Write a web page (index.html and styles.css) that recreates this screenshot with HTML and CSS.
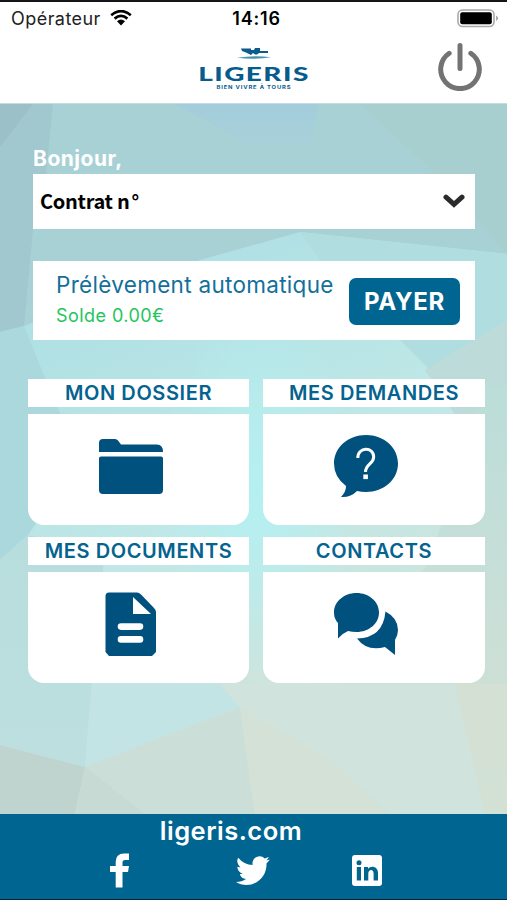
FILE: index.html
```html
<!DOCTYPE html>
<html lang="fr">
<head>
    <meta charset="UTF-8">
    <meta name="viewport" content="width=device-width, initial-scale=1.0">
    <title>Ligeris</title>
    <link rel="stylesheet" href="styles.css">
</head>
<body>
    <header>
        <div class="status">
            <div class="carrier">
                <span>Opérateur</span>
                <svg width="22" height="16" viewBox="0 0 22 16">
                    <path d="M1.2 5.2Q11-3 20.8 5.2M4.6 8.6Q11 3.2 17.4 8.6" fill="none" stroke="#000" stroke-width="2.7"/>
                    <path d="M7 11.2Q11 8 15 11.2L11 15.4Z"/>
                </svg>
            </div>
            <span class="time">14:16</span>
            <svg class="battery" width="42" height="19" viewBox="0 0 42 19">
                <rect x="1" y="1" width="36" height="16.5" rx="4.5" fill="#fff" stroke="#aaa" stroke-width="1.6"/>
                <rect x="3.2" y="3.2" width="31.6" height="12" rx="2"/>
                <path d="M39.2 6.5Q42.6 9.2 39.2 12Z" fill="#999"/>
            </svg>
        </div>
        <div class="topbar">
            <div class="logo">
                <svg width="34" height="13" viewBox="0 0 34 13">
                    <path d="M4 1.5H14V3H17L18 1H23V4H31V6H22L20 7.5H18L16 6 14 8 9 5.5 5 4Z" fill="#0b5c8c"/>
                    <path d="M0 10.8Q17 8 34 10.3Q17 13 0 10.8Z" fill="#4594ae"/>
                </svg>
                <div class="logo-name">LIGERIS</div>
                <div class="logo-sub">BIEN VIVRE À TOURS</div>
            </div>
            <svg class="power" width="44" height="48" viewBox="0 0 44 48">
                <path d="M11.2 10.3A19.3 19.3 0 1 0 32.8 10.3M22 2.6V25.6" fill="none" stroke="#737373" stroke-width="5" stroke-linecap="round"/>
            </svg>
        </div>
    </header>

    <main>
        <svg class="background" viewBox="0 104 507 710" preserveAspectRatio="none">
            <defs>
                <linearGradient id="base" x1="0" y1="0" x2="0.35" y2="1">
                    <stop offset="0" stop-color="#a7d0d6"/>
                    <stop offset="0.3" stop-color="#afe0e4"/>
                    <stop offset="0.65" stop-color="#c0e8e7"/>
                    <stop offset="1" stop-color="#d4e2d7"/>
                </linearGradient>
                <linearGradient id="blue" x1="0" y1="0" x2="0" y2="1">
                    <stop offset="0" stop-color="#a3cddc"/>
                    <stop offset="1" stop-color="#a8d0d9"/>
                </linearGradient>
                <linearGradient id="right" x1="0" y1="0" x2="0" y2="1">
                    <stop offset="0" stop-color="#bcddd9"/>
                    <stop offset="1" stop-color="#d4e1d5"/>
                </linearGradient>
                <linearGradient id="left" x1="0" y1="0" x2="0" y2="1">
                    <stop offset="0" stop-color="#b8dddd"/>
                    <stop offset="1" stop-color="#bddfdf"/>
                </linearGradient>
                <radialGradient id="glow">
                    <stop offset="0" stop-color="#b4f0f2"/>
                    <stop offset="1" stop-color="#b4f0f2" stop-opacity="0"/>
                </radialGradient>
            </defs>
            <rect y="104" width="507" height="710" fill="url(#base)"/>
            <path d="M0 104H507V254L300 232 200 260 24 326 0 332Z" fill="#a8d1d6"/>
            <path d="M360 104H507V254L440 178Z" fill="#a8cfd0"/>
            <path d="M175 104H318L312 144 250 146Z" fill="url(#blue)"/>
            <path d="M0 104H53L46 174 33 230 24 326 0 332Z" fill="#a1c7cf"/>
            <path d="M0 104H33L0 147Z" fill="#9cc0c7"/>
            <path d="M300 232L507 254V325L430 370 320 260Z" fill="#b0dddf"/>
            <path d="M0 332L24 326 45 378 80 460 28 535 0 560Z" fill="#abd8dd"/>
            <path d="M507 320L425 370 485 460 507 450Z" fill="#bddcd9"/>
            <path d="M485 387L507 387V814H420L340 684 430 560Z" fill="url(#right)"/>
            <path d="M0 560L28 535 105 550 92 684 85 767 0 745Z" fill="url(#left)"/>
            <ellipse cx="258" cy="490" rx="100" ry="190" fill="url(#glow)"/>
            <path d="M0 745L85 767 75 814H0Z" fill="#bfd4cf"/>
            <path d="M92 684H220L240 707 85 767Z" fill="#c3e4e4"/>
            <path d="M85 767L240 707 255 814H75Z" fill="#cbded8"/>
            <path d="M85 767L145 814H75Z" fill="#c7dad3"/>
            <path d="M220 684H455L475 770 485 814H255L240 707Z" fill="#d0e3dc"/>
            <path d="M240 707L330 760 390 814H255Z" fill="#d4e1d6"/>
            <path d="M455 684H507V770L475 770Z" fill="#d4e0d4"/>
        </svg>

        <div class="account">
            <div class="hello">Bonjour,</div>
            <div class="contract">
                <span>Contrat n<span class="degree">°</span></span>
                <svg width="22" height="15" viewBox="0 0 22 15">
                    <path d="M3 3.2L11 10.3 19 3.2" fill="none" stroke="#2b2b2b" stroke-width="5" stroke-linecap="round"/>
                </svg>
            </div>
            <div class="payment">
                <div>
                    <div class="mode">Prélèvement automatique</div>
                    <div class="balance">Solde 0.00€</div>
                </div>
                <button class="pay">PAYER</button>
            </div>
        </div>

        <div class="menu">
            <section>
                <h2>MON DOSSIER</h2>
                <div class="tile">
                    <svg width="64" height="64" viewBox="0 0 64 64">
                        <path d="M0 18V9Q0 5 4 5H16Q18 5 19 6.5L22 10.5H58Q64 10.5 64 18ZM0 24.5Q0 22.5 2 22.5H62Q64 22.5 64 24.5V56Q64 60 60 60H4Q0 60 0 56Z"/>
                    </svg>
                </div>
            </section>
            <section>
                <h2>MES DEMANDES</h2>
                <div class="tile">
                    <svg width="64" height="64" viewBox="0 0 64 64">
                        <path d="M32 1C50 1 64 13.5 64 29.5S50 58 32 58Q27 58 23 57Q17 63.5 7 63Q12 58 12 52Q0 43 0 29.5C0 13.5 14 1 32 1Z"/>
                        <path d="M23.8 24C23.8 12.5 39.7 12.5 39.7 23C39.7 30 31.5 30 31.5 38" fill="none" stroke="#fff" stroke-width="3"/>
                        <rect x="29.3" y="40.5" width="4.6" height="4.6" fill="#fff"/>
                    </svg>
                </div>
            </section>
            <section>
                <h2>MES DOCUMENTS</h2>
                <div class="tile">
                    <svg width="64" height="64" viewBox="0 0 64 64">
                        <path fill-rule="evenodd" d="M10 .5H38Q40 .5 42 2.5L55 16Q57 18 57 20V60L53 64H10L6.5 60V4Q6.5 .5 10 .5ZM34 5V22H52Z"/>
                        <path d="M22 34.6H41M22 47.4H41" stroke="#fff" stroke-width="6.6" stroke-linecap="round"/>
                    </svg>
                </div>
            </section>
            <section>
                <h2>CONTACTS</h2>
                <div class="tile">
                    <svg width="64" height="64" viewBox="0 0 64 64">
                        <path d="M22.5 1C35 1 45 9.5 45 20.5S35 40 22.5 40Q18 40 14 39Q9 41 4 46.5V31Q0 27 0 20.5C0 9.5 10 1 22.5 1Z"/>
                        <path d="M51.5 19.5Q64 26 64 38Q64 43 61 48V63L51 55Q33 60 23 46.5Q49 46 51.5 19.5Z"/>
                    </svg>
                </div>
            </section>
        </div>
    </main>

    <footer>
        <div class="site">ligeris.com</div>
        <div class="social">
            <svg width="20" height="35" viewBox="0 0 20 35">
                <path d="M19 .5V7H15Q12.5 7 12.5 9.5V13H19L18 19H12.5V34.5H5.7V19H0V13H5.7V9Q5.7 .5 14 .5Z"/>
            </svg>
            <svg class="twitter" width="34" height="29" viewBox="0 0 34 29">
                <path d="M34 3.5L30.5 7.5C31 20 21 29 10.5 29Q4.5 29 0 26Q6 26 10 23Q5 22.5 3.8 18H7Q1.5 16 1.3 10.8L4.4 11.5Q-.5 7 2.2 1.7Q8 8.7 16.6 9C15.2 1.5 24.5-2.5 28.5 2.5L33 1 30.5 4.5Z"/>
            </svg>
            <svg width="30" height="31" viewBox="0 0 30 31">
                <rect width="30" height="31" rx="3"/>
                <g fill="#006691">
                    <circle cx="7" cy="7.7" r="2.5"/>
                    <path d="M4.8 12H9V25.5H4.8ZM12 12H16V14C18.5 10 26 11 26 18V25.5H21.6V18.5C21.6 13.7 16.3 14 16.3 18.5V25.5H12Z"/>
                </g>
            </svg>
        </div>
    </footer>
</body>
</html>
```
FILE: styles.css
```css
* {
    box-sizing: border-box;
}
body {
    display: flex;
    flex-direction: column;
    height: 900px;
    margin: 0;
    font-family: Inter, "Liberation Sans", sans-serif;
    background-color: #fff;
    overflow: hidden;
}
svg {
    display: block;
    flex: none;
}
header {
    height: 104px;
    border-top: 2px solid #151419;
    border-bottom: 1px solid #c9dadd;
}
.status {
    display: grid;
    grid-template-columns: 1fr auto 1fr;
    align-items: center;
    height: 32px;
    padding: 0 8px 0 11px;
}
.carrier {
    display: flex;
    align-items: center;
    gap: 9px;
    font-size: 18px;
    letter-spacing: 0.45px;
    color: #222;
}
.time {
    margin-left: 3px;
    font-size: 18px;
    font-weight: 600;
    letter-spacing: 0.8px;
}
.battery {
    justify-self: end;
}
.topbar {
    display: grid;
    grid-template-columns: 1fr auto 1fr;
    padding: 9px 25px 0 26px;
}
.logo {
    grid-column: 2;
    display: flex;
    flex-direction: column;
    align-items: center;
    padding-top: 4px;
    color: #075b8d;
    text-align: center;
}
.logo-name {
    margin-top: 3px;
    font-family: Lato, sans-serif;
    font-size: 19px;
    font-weight: 900;
    line-height: 21px;
    letter-spacing: 1px;
    transform: scaleX(1.47);
}
.logo-sub {
    margin-top: 1px;
    font-size: 5px;
    font-weight: 700;
    line-height: 5px;
    letter-spacing: 0.7px;
    transform: scaleX(1.17);
}
.power {
    justify-self: end;
}
main {
    position: relative;
    height: 710px;
    padding: 42px 22px 0 28px;
}
.background {
    position: absolute;
    top: 0;
    left: 0;
    width: 100%;
    height: 100%;
    z-index: -1;
}
.account {
    padding: 0 10px 0 5px;
}
.hello {
    height: 28px;
    font-size: 21px;
    font-weight: 700;
    line-height: 26px;
    letter-spacing: 0.5px;
    color: #fff;
}
.contract {
    display: flex;
    justify-content: space-between;
    align-items: center;
    height: 55px;
    padding: 0 10px 0 7px;
    background-color: #fff;
    font-family: "Noto Sans CJK JP", sans-serif;
    font-size: 20px;
    font-weight: 700;
    line-height: 28px;
    letter-spacing: -0.3px;
}
.contract span {
    margin-top: -2px;
}
.degree {
    margin-left: 2px;
    font-size: 19px;
}
.payment {
    display: flex;
    justify-content: space-between;
    align-items: center;
    height: 79px;
    margin-top: 32px;
    padding: 1px 15px 0 23px;
    background-color: #fff;
}
.mode {
    font-size: 22.5px;
    line-height: 30px;
    letter-spacing: 0.3px;
    color: #12709b;
    white-space: nowrap;
}
.balance {
    font-size: 18px;
    line-height: 32px;
    letter-spacing: 0.45px;
    color: #23c55e;
}
.pay {
    width: 111px;
    height: 47px;
    padding: 0;
    border: none;
    border-radius: 7px;
    background-color: #006691;
    color: #fff;
    font-family: inherit;
    font-size: 24px;
    font-weight: 700;
    letter-spacing: 0.7px;
}
.menu {
    display: grid;
    grid-template-columns: 221px 222px;
    gap: 12px 14px;
    margin-top: 39px;
}
h2 {
    height: 28px;
    margin: 0 0 7px;
    background-color: #fff;
    color: #04638f;
    font-size: 20px;
    font-weight: 600;
    line-height: 28px;
    letter-spacing: 0.6px;
    text-align: center;
}
.tile {
    display: flex;
    justify-content: center;
    height: 111px;
    padding: 20px 16px 0 0;
    border-radius: 0 0 16px 16px;
    background-color: #fff;
    fill: #00517e;
}
footer {
    height: 86px;
    border-bottom: 1px solid #0b2533;
    background-color: #006691;
    color: #fff;
}
.site {
    height: 38px;
    padding-right: 45px;
    font-size: 25.5px;
    font-weight: 600;
    line-height: 34px;
    letter-spacing: 0.5px;
    text-align: center;
}
.social {
    display: flex;
    align-items: center;
    justify-content: space-between;
    padding: 1px 125px 0 110px;
    fill: #fff;
}
.twitter {
    margin-left: 24px;
}
```
